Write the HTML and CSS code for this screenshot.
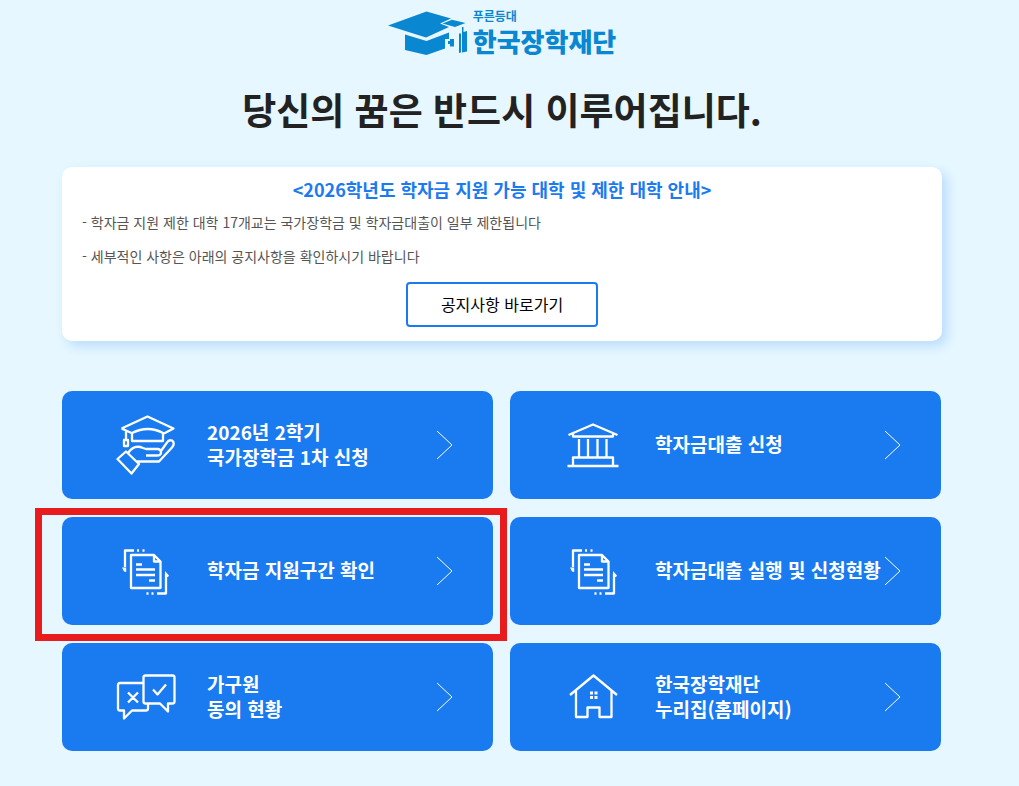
FILE: index.html
```html
<!DOCTYPE html>
<html lang="ko">
<head>
<meta charset="utf-8">
<meta name="viewport" content="width=device-width, initial-scale=1">
<title>한국장학재단</title>
<link rel="stylesheet" href="styles.css">
</head>
<body>
<div class="page">
  <header class="header">
    <a class="logo" href="#">
      <svg class="logo-mark" width="80" height="46" viewBox="0 0 80 46" aria-hidden="true">
        <path d="M0 15.500 38.500 1.500 63 8.500 52 13.500l9 3.500L38 27.500Z"/>
        <path d="M54.500 13.500 64 9.800 77.500 13 67 17Z"/>
        <path d="M17 24.500 38.500 31 61 22.500V29h-4v9.500L38.500 45 17 40Z"/>
        <path d="M60 31h2v-2h4v7.500h-4V34h-2Z"/>
        <path d="M71 23.500h2v19l-2 .500ZM74 17h1.500v5l3.500-1v20.500l-5 1Z"/>
      </svg>
      <span class="logo-text"><span class="logo-tag">푸른등대</span><span class="logo-name">한국장학재단</span></span>
    </a>
    <h1 class="title">당신의 꿈은 반드시 이루어집니다.</h1>
  </header>

  <main>
    <section class="notice">
      <h2 class="notice-title">&lt;2026학년도 학자금 지원 가능 대학 및 제한 대학 안내&gt;</h2>
      <p class="notice-line">- 학자금 지원 제한 대학 17개교는 국가장학금 및 학자금대출이 일부 제한됩니다</p>
      <p class="notice-line">- 세부적인 사항은 아래의 공지사항을 확인하시기 바랍니다</p>
      <button class="notice-button" type="button">공지사항 바로가기</button>
    </section>

    <nav class="menu">
      <a class="card" href="#">
        <svg class="icon" width="60" height="60" viewBox="0 0 60 60" aria-hidden="true">
          <path d="M5.500 13.500 31.500 1.500l26 12-9.500 5M5.500 13.500l10 4.500M16 26V18q16-8 31 0v8ZM10 16.500V25M8 25h4v6H8Z"/>
          <path d="m1.500 44 8.500-7.500 13 12.500L15.500 58.500ZM12 38q6-9 15-5l3 1h12q3 .5 3 3.500t-4 3H30M21 46.500h22l13-14q3.500-4.500 0-7-3.500-1-5 2L45 36"/>
        </svg>
        <span class="label">2026년 2학기<br>국가장학금 1차 신청</span>
        <svg class="arrow" width="18" height="30" viewBox="0 0 18 30" aria-hidden="true"><path d="m1 1 15 14L1 29"/></svg>
      </a>
      <a class="card" href="#">
        <svg class="icon" width="60" height="60" viewBox="0 0 60 60" aria-hidden="true">
          <path d="M4.500 20 29 9.500 53.500 20M9 19v2.500h40V19M15 24v18M24 24v18M33.500 24v18M42.500 24v18M9 50v-7.500h40V50M3.500 51h51"/>
        </svg>
        <span class="label">학자금대출 신청</span>
        <svg class="arrow" width="18" height="30" viewBox="0 0 18 30" aria-hidden="true"><path d="m1 1 15 14L1 29"/></svg>
      </a>
      <a class="card card-marked" href="#">
        <svg class="icon" width="60" height="60" viewBox="0 0 60 60" aria-hidden="true">
          <path d="M15 14h23l6.500 6.500V47H15ZM38 15v5.500h6M20 23.500h6M20 28.500h19M20 34h19M33 39.500h6M9 26V9.500h9M21 9.500h2M26.500 9.500h2M50 33v19.500h-9M37.500 52.500h-2M32.500 52.500h-2"/>
          <path class="solid" d="M6 26.500h4.200V31L8 30.500ZM49 36v-6l4 4.500-1 1.500Z"/>
        </svg>
        <span class="label">학자금 지원구간 확인</span>
        <svg class="arrow" width="18" height="30" viewBox="0 0 18 30" aria-hidden="true"><path d="m1 1 15 14L1 29"/></svg>
      </a>
      <a class="card" href="#">
        <svg class="icon" width="60" height="60" viewBox="0 0 60 60" aria-hidden="true">
          <path d="M15 14h23l6.500 6.500V47H15ZM38 15v5.500h6M20 23.500h6M20 28.500h19M20 34h19M33 39.500h6M9 26V9.500h9M21 9.500h2M26.500 9.500h2M50 33v19.500h-9M37.500 52.500h-2M32.500 52.500h-2"/>
          <path class="solid" d="M6 26.500h4.200V31L8 30.500ZM49 36v-6l4 4.500-1 1.500Z"/>
        </svg>
        <span class="label">학자금대출 실행 및 신청현황</span>
        <svg class="arrow" width="18" height="30" viewBox="0 0 18 30" aria-hidden="true"><path d="m1 1 15 14L1 29"/></svg>
      </a>
      <a class="card" href="#">
        <svg class="icon" width="60" height="60" viewBox="0 0 60 60" aria-hidden="true">
          <path d="M27.500 16H4q-2 0-2 2V41.500q0 2 2 2h4v8l8-8h14q2 0 2-2v-4M29.500 8.500h27q2 0 2 2v24q0 2-2 2h-4.500v8l-8-8H29.500q-2 0-2-2V10.500q0-2 2-2ZM12 25.500l10 10M22 25.500 12 35.500M37 22.500l4.500 5L50 17.500"/>
        </svg>
        <span class="label">가구원<br>동의 현황</span>
        <svg class="arrow" width="18" height="30" viewBox="0 0 18 30" aria-hidden="true"><path d="m1 1 15 14L1 29"/></svg>
      </a>
      <a class="card" href="#">
        <svg class="icon" width="60" height="60" viewBox="0 0 60 60" aria-hidden="true">
          <path d="M6 28 29.500 8.500 53 28M12 24V50h11.500v-9.500h12V50H47.500V24"/>
          <path class="solid" d="M26 24.500h3v3h-3ZM30.500 24.500h3v3h-3ZM26 29h3v3h-3ZM30.500 29h3v3h-3Z"/>
        </svg>
        <span class="label">한국장학재단<br>누리집(홈페이지)</span>
        <svg class="arrow" width="18" height="30" viewBox="0 0 18 30" aria-hidden="true"><path d="m1 1 15 14L1 29"/></svg>
      </a>
    </nav>
  </main>
</div>
</body>
</html>
```
FILE: styles.css
```css
* {
  box-sizing: border-box;
}

body {
  margin: 0;
  padding-right: 15px;
  background: #e6f7ff;
  color: #222;
  font-family: "Noto Sans CJK KR", "Noto Sans", sans-serif;
}

.page {
  max-width: 880px;
  margin: 0 auto;
  padding: 10px 0 36px;
}

.header {
  display: flex;
  flex-direction: column;
  align-items: center;
}

.logo {
  display: flex;
  gap: 5px;
  height: 46px;
  color: #0a87d1;
  text-decoration: none;
}

.logo-mark {
  fill: currentColor;
}

.logo-text {
  display: flex;
  flex-direction: column;
  font-family: "Liberation Sans", "Noto Sans CJK KR", sans-serif;
  font-weight: 900;
}

.logo-tag {
  font-size: 12px;
  line-height: 14px;
  font-weight: 700;
}

.logo-name {
  margin-top: 2px;
  font-size: 26px;
  line-height: 34px;
}

.title {
  margin: 26px 0 0;
  font-size: 37px;
  line-height: 54px;
  font-weight: 700;
}

.notice {
  display: flex;
  flex-direction: column;
  margin-top: 31px;
  padding: 9px 20px 14px;
  border-radius: 10px;
  background: #fff;
  box-shadow: 5px 5px 12px #b9dcfc;
}

.notice-title {
  margin: 0 0 4px;
  color: #1a7af0;
  font-size: 18px;
  line-height: 26px;
  font-weight: 700;
  text-align: center;
}

.notice-line {
  margin: 0 0 2px;
  color: #555;
  font-size: 14px;
  line-height: 32px;
}

.notice-button {
  align-self: center;
  margin-top: 8px;
  padding: 8px 33px;
  border: 2px solid #1a7af0;
  border-radius: 4px;
  background: #fff;
  color: #000;
  font-family: inherit;
  font-size: 16px;
  line-height: 25px;
}

.menu {
  display: grid;
  grid-template-columns: repeat(2, minmax(0, 1fr));
  gap: 18px 17px;
  margin-top: 50px;
  padding-right: 1px;
}

.card {
  position: relative;
  display: grid;
  grid-template-columns: 60px minmax(0, 1fr) 18px;
  column-gap: 31px;
  align-items: center;
  min-height: 108px;
  padding: 0 39px 0 54px;
  border-radius: 10px;
  background: #1a7af0;
  color: #fff;
  font-size: 19px;
  line-height: 25px;
  font-weight: 700;
  text-decoration: none;
}

.label {
  padding-bottom: 3px;
  white-space: nowrap;
}

.icon,
.arrow {
  fill: none;
  stroke: #fff;
  stroke-width: 2.3;
  stroke-linejoin: round;
}

.arrow {
  stroke-width: 1;
}

.icon .solid {
  fill: #fff;
  stroke: none;
}

.card-marked::after {
  content: "";
  position: absolute;
  inset: -9px -14px -16px -27px;
  border: 7px solid #e81c1c;
  pointer-events: none;
}
```
